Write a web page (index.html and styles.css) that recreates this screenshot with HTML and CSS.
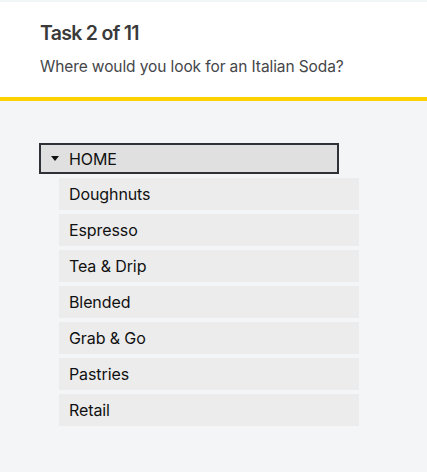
FILE: index.html
```html
<!DOCTYPE html>
<html>
<head>
<meta charset="utf-8">
<link rel="stylesheet" href="styles.css">
</head>
<body>
<div class="page">
  <header class="header">
    <h1 class="title">Task 2 of 11</h1>
    <p class="question">Where would you look for an Italian Soda?</p>
  </header>
  <main class="content">
    <div class="tree">
      <div class="node-root">
        <span class="caret"></span>
        <span class="node-label">HOME</span>
      </div>
      <ul class="children">
        <li class="child">Doughnuts</li>
        <li class="child">Espresso</li>
        <li class="child">Tea &amp; Drip</li>
        <li class="child">Blended</li>
        <li class="child">Grab &amp; Go</li>
        <li class="child">Pastries</li>
        <li class="child">Retail</li>
      </ul>
    </div>
  </main>
</div>
</body>
</html>
```
FILE: styles.css
```css
html, body {
  margin: 0;
  padding: 0;
}
body {
  font-family: Inter, "Noto Sans", sans-serif;
  background: #f4f5f7;
  width: 427px;
  height: 472px;
  overflow: hidden;
}
.page {
  display: flex;
  flex-direction: column;
}
.header {
  background: #ffffff;
  border-top: 2px solid #f1f5f6;
  border-bottom: 4px solid #fdd200;
  padding: 19px 40px 0;
  height: 76px;
}
.title {
  margin: 0;
  font-size: 19.5px;
  font-weight: 600;
  color: #3a3a3a;
  letter-spacing: -0.7px;
  line-height: 24px;
}
.question {
  margin: 12px 0 0;
  font-size: 15.5px;
  color: #444649;
  line-height: 20px;
  letter-spacing: -0.1px;
}
.content {
  padding: 42px 0 0 39px;
}
.tree {
  display: flex;
  flex-direction: column;
}
.node-root {
  box-sizing: border-box;
  width: 300px;
  height: 31px;
  border: 2px solid #2e3236;
  background: #e0e0e0;
  display: flex;
  align-items: center;
  padding-left: 10px;
  gap: 10px;
}
.caret {
  width: 0;
  height: 0;
  border-left: 4px solid transparent;
  border-right: 4px solid transparent;
  border-top: 5px solid #111;
}
.node-label {
  font-size: 16px;
  color: #111;
  letter-spacing: -0.1px;
}
.children {
  list-style: none;
  margin: 4px 0 0 20px;
  padding: 0;
  display: flex;
  flex-direction: column;
  gap: 4px;
}
.child {
  box-sizing: border-box;
  width: 300px;
  height: 32px;
  background: #ececec;
  display: flex;
  align-items: center;
  padding-left: 10px;
  font-size: 16px;
  color: #111;
  letter-spacing: -0.1px;
}
```
